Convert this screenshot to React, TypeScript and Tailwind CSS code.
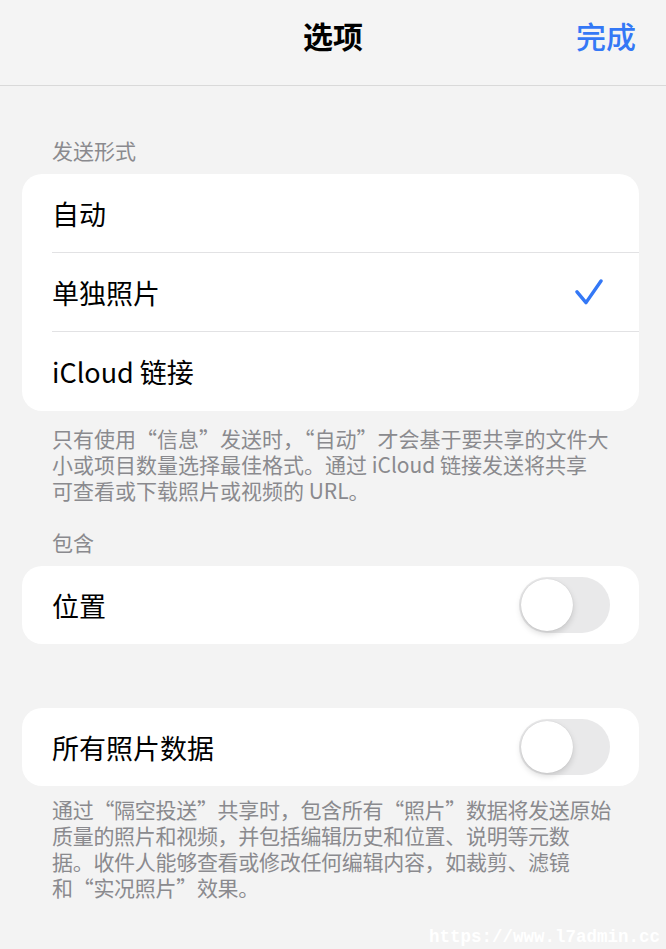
const font = { fontFamily: '"Noto Sans CJK SC", "Noto Sans", sans-serif' };

function Toggle() {
  return (
    <div className="relative h-[56px] w-[91px] rounded-full bg-[#e9e9ea]">
      <div className="absolute left-[2px] top-[2px] h-[52px] w-[52px] rounded-full bg-white shadow-[0_3px_6px_rgba(0,0,0,0.15),0_0_1px_rgba(0,0,0,0.15)]" />
    </div>
  );
}

function Checkmark() {
  return (
    <svg width="28" height="28" viewBox="0 0 28 28" className="mr-[7px]" fill="none">
      <path
        d="M2 13.8 L11 24.6 L26 3"
        stroke="#3478f6"
        strokeWidth="3.4"
        strokeLinecap="round"
        strokeLinejoin="round"
      />
    </svg>
  );
}

function Row({ label, right, divider }: { label: string; right?: React.ReactNode; divider?: boolean }) {
  return (
    <div className="pl-[30px]">
      <div className={`flex h-[79px] items-center justify-between pr-[29px] ${divider ? 'border-b border-[#e2e2e4]' : ''}`}>
        <span className="text-[27px] leading-none text-black">{label}</span>
        {right}
      </div>
    </div>
  );
}

export default function App() {
  return (
    <div className="relative min-h-[949px] w-[666px] overflow-hidden bg-[#f3f3f3]" style={font}>
      <div className="flex h-[86px] items-start justify-center border-b border-[#d9d9d9] bg-[#f4f4f4] pt-[14px]">
        <span className="text-[30px] font-bold leading-[42px] text-black">选项</span>
        <span className="absolute right-[30px] top-[14px] text-[30px] font-medium leading-[42px] text-[#3478f6]">完成</span>
      </div>

      <div className="mt-[50px] pl-[52px] text-[21px] leading-[28px] text-[#8a8a8e]">发送形式</div>
      <div className="ml-[22px] mt-[10px] w-[617px] overflow-hidden rounded-[20px] bg-white">
        <Row label="自动" divider />
        <Row label="单独照片" divider right={<Checkmark />} />
        <Row label="iCloud 链接" />
      </div>
      <p className="mt-[14px] whitespace-nowrap pl-[52px] text-[21px] leading-[26px] text-[#8a8a8e]">
        只有使用“信息”发送时，“自动”才会基于要共享的文件大
        <br />
        小或项目数量选择最佳格式。通过 iCloud 链接发送将共享
        <br />
        可查看或下载照片或视频的 URL。
      </p>

      <div className="mt-[25px] pl-[52px] text-[21px] leading-[28px] text-[#8a8a8e]">包含</div>
      <div className="ml-[22px] mt-[10px] w-[617px] rounded-[20px] bg-white">
        <div className="flex h-[78px] items-center justify-between pl-[30px] pr-[29px]">
          <span className="text-[27px] leading-none text-black">位置</span>
          <Toggle />
        </div>
      </div>

      <div className="ml-[22px] mt-[64px] w-[617px] rounded-[20px] bg-white">
        <div className="flex h-[78px] items-center justify-between pl-[30px] pr-[29px]">
          <span className="text-[27px] leading-none text-black">所有照片数据</span>
          <Toggle />
        </div>
      </div>
      <p className="mt-[10px] whitespace-nowrap pl-[52px] text-[21px] leading-[26px] tracking-[-0.3px] text-[#8a8a8e]">
        通过“隔空投送”共享时，包含所有“照片”数据将发送原始
        <br />
        质量的照片和视频，并包括编辑历史和位置、说明等元数
        <br />
        据。收件人能够查看或修改任何编辑内容，如裁剪、滤镜
        <br />
        和“实况照片”效果。
      </p>

      <div
        className="absolute bottom-[3px] right-[6px] text-[17.5px] font-bold leading-none text-white"
        style={{ fontFamily: '"Liberation Mono", monospace' }}
      >
        https://www.l7admin.cc
      </div>
    </div>
  );
}
